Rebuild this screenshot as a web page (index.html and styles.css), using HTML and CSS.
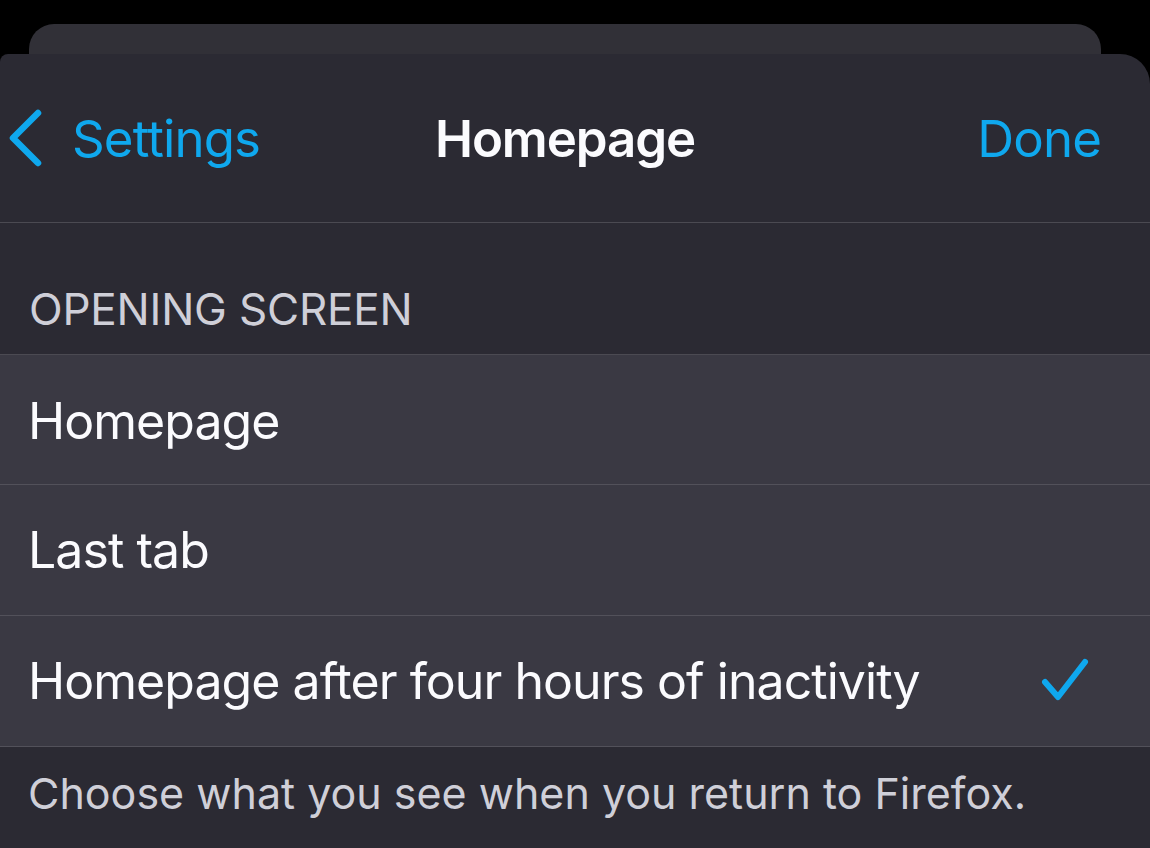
FILE: index.html
```html
<!DOCTYPE html>
<html lang="en">
<head>
<meta charset="utf-8">
<link rel="stylesheet" href="styles.css">
</head>
<body>
<div class="back-card"></div>
<div class="sheet">
  <header class="nav">
    <div class="nav-left">
      <svg class="chevron" width="34" height="58" viewBox="0 0 34 58"><path d="M30 4 L5 29 L30 54" fill="none" stroke="#0fa8ee" stroke-width="6.5" stroke-linecap="round" stroke-linejoin="round"/></svg>
      <span class="link">Settings</span>
    </div>
    <h1 class="title">Homepage</h1>
    <div class="nav-right"><span class="link">Done</span></div>
  </header>
  <div class="section-header">OPENING SCREEN</div>
  <ul class="list">
    <li class="row">Homepage</li>
    <li class="row">Last tab</li>
    <li class="row">Homepage after four hours of inactivity
      <svg class="check" width="48" height="46" viewBox="0 0 48 46"><path d="M4 24 L17 39 L44 4" fill="none" stroke="#0fa8ee" stroke-width="6" stroke-linecap="round" stroke-linejoin="round"/></svg>
    </li>
  </ul>
  <p class="footer">Choose what you see when you return to Firefox.</p>
</div>
</body>
</html>
```
FILE: styles.css
```css
html, body {
  margin: 0;
  padding: 0;
  background: #000;
  height: 100%;
  overflow: hidden;
  font-family: Inter, "Noto Sans", sans-serif;
}
.back-card {
  height: 30px;
  margin: 24px 49px 0 29px;
  background: #313037;
  border-radius: 25px 25px 0 0;
}
.sheet {
  background: #2b2a33;
  border-radius: 8px 30px 0 0;
  height: 800px;
}
.nav {
  display: grid;
  grid-template-columns: 1fr auto 1fr;
  align-items: center;
  height: 168px;
  padding: 0 49px 0 8px;
  border-bottom: 1px solid #4b4a52;
}
.nav-left {
  display: flex;
  align-items: center;
  gap: 30px;
}
.chevron { display: block; }
.link {
  color: #0fa8ee;
  font-size: 51px;
  font-weight: 400;
  letter-spacing: -0.9px;
}
.title {
  margin: 0 0 0 21px;
  color: #fbfbfe;
  font-size: 51px;
  font-weight: 600;
  letter-spacing: -1.1px;
}
.nav-right {
  display: flex;
  justify-content: flex-end;
}
.section-header {
  height: 132px;
  box-sizing: border-box;
  padding: 0 0 18px 29px;
  display: flex;
  align-items: flex-end;
  color: #cfcfd8;
  font-size: 44px;
  letter-spacing: -0.2px;
  border-bottom: 1px solid #4b4a52;
}
.list {
  list-style: none;
  margin: 0;
  padding: 0;
}
.row {
  height: 130px;
  display: flex;
  align-items: center;
  justify-content: space-between;
  padding: 0 61px 0 28px;
  background: #3a3943;
  color: #fbfbfe;
  font-size: 50px;
  letter-spacing: -0.95px;
  border-bottom: 1px solid #52515a;
}
.row:first-child { height: 127px; padding-top: 2px; }
.check { display: block; }
.footer {
  margin: 0;
  padding: 20px 0 0 28px;
  color: #cfcfd8;
  font-size: 43px;
}
```
